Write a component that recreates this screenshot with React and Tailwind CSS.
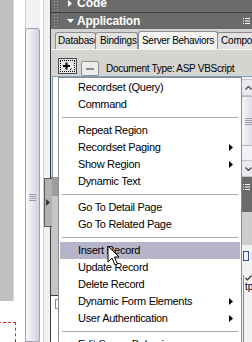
import React from "react";

const font = "font-['Liberation_Sans',Arial,sans-serif]";

function Grip({ className = "" }) {
  return (
    <div
      className={`h-full bg-[radial-gradient(#a9a9a9_0.9px,transparent_1px)] bg-[length:3px_3px] ${className}`}
    />
  );
}

function OptionsIcon() {
  return (
    <svg width="7" height="6" viewBox="0 0 7 6">
      <rect x="0" y="0" width="1" height="1" fill="#fff" />
      <rect x="2" y="0" width="5" height="1" fill="#fff" />
      <rect x="0" y="2.5" width="1" height="1" fill="#fff" />
      <rect x="2" y="2.5" width="5" height="1" fill="#fff" />
      <rect x="0" y="5" width="1" height="1" fill="#fff" />
      <rect x="2" y="5" width="5" height="1" fill="#fff" />
    </svg>
  );
}

function MenuItem({ label, sub, active }) {
  return (
    <div
      className={`mx-px h-[17px] flex items-center pl-[18px] pr-[7px] ${
        active ? "bg-[#b5b4c8]" : ""
      }`}
    >
      <span className="flex-1 text-[11px] leading-[17px] tracking-[-0.3px] text-black whitespace-nowrap">
        {label}
      </span>
      {sub && (
        <svg width="4" height="7" viewBox="0 0 4 7">
          <path d="M0 0L4 3.5L0 7Z" fill="#000" />
        </svg>
      )}
    </div>
  );
}

function Sep() {
  return (
    <div className="h-[9px] flex items-center px-[3px]">
      <div className="h-px w-full bg-[#a9a9a9]" />
    </div>
  );
}

export default function App() {
  return (
    <div
      className={`relative w-[252px] h-[342px] overflow-hidden bg-white flex ${font}`}
    >
      {/* document area */}
      <div className="w-[25px] shrink-0 flex flex-col">
        <div className="w-[14px] h-[309px] bg-[#c0c0c0] border-r border-[#d6d6d6]" />
        <div className="mt-[21px] -ml-[2px] w-[18px] h-[20px] border-t border-r border-dashed border-[#e2261f]" />
      </div>

      {/* document scrollbar */}
      <div className="w-[15px] shrink-0 flex flex-col border-l border-[#c9c9d6] bg-[#f1f1f6]">
        <div className="h-[28px]" />
        <div className="flex-1 -ml-px rounded-t-[3px] border border-[#a2a2b6] bg-gradient-to-r from-[#f8f8fb] via-[#e6e6ef] to-[#cfcfde] flex flex-col items-center pt-[165px]">
          <div className="flex flex-col gap-[1px]">
            <div className="w-[7px] h-px bg-[#9c9cae]" />
            <div className="w-[7px] h-px bg-[#9c9cae]" />
            <div className="w-[7px] h-px bg-[#9c9cae]" />
            <div className="w-[7px] h-px bg-[#9c9cae]" />
          </div>
        </div>
      </div>
      <div className="w-[3px] shrink-0 bg-white" />
      <div className="w-px shrink-0 bg-[#cdcdcd]" />
      <div className="w-[6px] shrink-0 bg-[#f2f2f2]" />

      {/* panel */}
      <div className="w-[206px] shrink-0 border-l border-[#3a3a3a] bg-[#d5d4d0] flex flex-col">
        {/* Code header */}
        <div className="h-[12px] shrink-0 bg-[#6b6b6b] flex items-start">
          <Grip className="w-[7px] ml-[2px] shrink-0" />
          <svg width="4" height="7" viewBox="0 0 4 7" className="ml-[8px] shrink-0">
            <path d="M0 0L4 3.5L0 7Z" fill="#fff" />
          </svg>
          <span className="ml-[5px] text-[12px] leading-[7px] font-bold text-white">
            Code
          </span>
        </div>
        <div className="h-px shrink-0 bg-[#3f3f3f]" />
        {/* Application header */}
        <div className="h-[16px] shrink-0 bg-[#6b6b6b] flex items-center">
          <Grip className="w-[7px] ml-[2px] shrink-0" />
          <svg width="7" height="4" viewBox="0 0 7 4" className="ml-[7px] shrink-0">
            <path d="M0 0L7 0L3.5 4Z" fill="#fff" />
          </svg>
          <span className="ml-[3px] text-[12px] leading-[16px] font-bold text-white tracking-[-0.2px]">
            Application
          </span>
          <div className="ml-auto mr-[6px] flex">
            <OptionsIcon />
          </div>
        </div>
        {/* tabs */}
        <div className="h-[21px] shrink-0 flex items-end pl-[4px] border-b border-[#f4f4f4] overflow-hidden">
          <div className="shrink-0 w-[41px] h-[17px] overflow-hidden border border-b-0 border-[#8e8e8e] rounded-t-[3px] bg-[#e2e2e2] pl-[2px] text-[10px] leading-[16px] tracking-[-0.2px] whitespace-nowrap text-black">
            Databases
          </div>
          <div className="shrink-0 -ml-px w-[43px] h-[17px] overflow-hidden border border-b-0 border-[#8e8e8e] rounded-t-[3px] bg-[#e2e2e2] pl-[4px] text-[10px] leading-[16px] tracking-[-0.2px] whitespace-nowrap text-black">
            Bindings
          </div>
          <div className="shrink-0 relative z-10 -mb-px w-[80px] h-[19px] overflow-hidden border border-b-0 border-[#8e8e8e] rounded-t-[3px] bg-[#f3f3f3] pl-[3px] text-[10px] leading-[18px] tracking-[-0.3px] whitespace-nowrap text-black">
            Server Behaviors
          </div>
          <div className="shrink-0 -ml-px w-[60px] h-[17px] overflow-hidden border border-b-0 border-[#8e8e8e] rounded-t-[3px] bg-[#e2e2e2] pl-[3px] text-[10px] leading-[16px] tracking-[-0.2px] whitespace-nowrap text-black">
            Components
          </div>
        </div>
        {/* toolbar */}
        <div className="h-[26px] shrink-0 flex items-start pl-[7px]">
          <div className="shrink-0 mt-[8px] w-[19px] h-[16px] border border-[#4a4a4a] bg-[#e6e6e6] flex items-center justify-center">
            <div className="w-[15px] h-[12px] border border-dotted border-black flex items-center justify-center">
              <svg width="9" height="9" viewBox="0 0 9 9">
                <path d="M3.5 0.5V7.5M0 4H7" stroke="#000" strokeWidth="2" />
                <path d="M7 8L8.5 6.5" stroke="#000" strokeWidth="1" />
              </svg>
            </div>
          </div>
          <div className="shrink-0 ml-[4px] mt-[11px] w-[18px] h-[15px] border border-[#8e8e8e] rounded-[2px] bg-[#ececec] flex items-center justify-center">
            <div className="w-[8px] h-[2px] bg-[#8a8a8a]" />
          </div>
          <span className="shrink-0 ml-[7px] mt-[13px] text-[10px] leading-[11px] tracking-[-0.3px] text-black whitespace-nowrap">
            Document Type: ASP VBScript
          </span>
        </div>
        {/* list area */}
        <div className="h-[101px] shrink-0 ml-px flex border-l border-t border-[#7f9db9] bg-white">
          <div className="flex-1" />
          <div className="w-[17px] bg-[#f1f1f5] flex flex-col border-l border-[#c6c6d2]">
            <div className="mt-[2px] h-[17px] mx-px rounded-[2px] border border-[#c4c4d2] bg-[#e9e9f0] flex items-center justify-center">
              <svg width="7" height="4" viewBox="0 0 7 4">
                <path d="M0.5 3.5L3.5 0.5L6.5 3.5" stroke="#4d4d5c" strokeWidth="1.4" fill="none" />
              </svg>
            </div>
            <div className="h-[50px] mx-px rounded-[2px] border border-[#b4b4c6] bg-gradient-to-r from-[#f6f6fa] to-[#d8d8e4] flex flex-col items-center justify-center gap-[1px]">
              <div className="w-[7px] h-px bg-[#9a9aac]" />
              <div className="w-[7px] h-px bg-[#9a9aac]" />
              <div className="w-[7px] h-px bg-[#9a9aac]" />
              <div className="w-[7px] h-px bg-[#9a9aac]" />
            </div>
            <div className="flex-1" />
            <div className="h-[17px] mx-px rounded-[2px] border border-[#c4c4d2] bg-[#e9e9f0] flex items-center justify-center">
              <svg width="7" height="4" viewBox="0 0 7 4">
                <path d="M0.5 0.5L3.5 3.5L6.5 0.5" stroke="#4d4d5c" strokeWidth="1.4" fill="none" />
              </svg>
            </div>
          </div>
        </div>
        {/* next panel header */}
        <div className="h-[19px] shrink-0 bg-[#6b6b6b] flex items-center">
          <div className="w-[6px] h-full ml-px bg-[#9b9b9b]">
            <Grip className="w-full" />
          </div>
          <div className="ml-auto mr-[6px] flex">
            <OptionsIcon />
          </div>
        </div>
        {/* body */}
        <div className="flex-1 flex">
          <div className="w-[7px] flex flex-col">
            <div className="h-[99px] bg-[#c6c6c6]" />
            <div className="h-px bg-[#3f3f3f]" />
            <div className="flex-1 bg-white pl-[4px] pt-[3px]">
              <div className="w-[5px] h-[10px] border border-[#8a8a8a]" />
            </div>
          </div>
          <div className="flex-1" />
          <div className="w-[15px] flex flex-col">
            <div className="h-[16px] bg-[#6b6b6b]" />
            <div className="h-[33px] bg-[#cdcdcd]" />
            <div className="flex-1 bg-[#f2f2f2] flex flex-col pl-[2px]">
              <div className="mt-[6px] w-[6px] h-[10px] border border-[#2a4fb0]" />
              <div className="mt-[14px] border-l border-[#8a8a8a] pl-[1px]">
                <svg width="7" height="6" viewBox="0 0 7 6">
                  <path d="M0.5 3L2.5 5L6.5 0.5" stroke="#333" strokeWidth="1.2" fill="none" />
                </svg>
                <div className="text-[10px] leading-[11px] text-black">tp</div>
                <div className="h-[50px]" />
              </div>
            </div>
          </div>
        </div>
      </div>

      {/* splitter handle */}
      <div className="absolute left-[44px] top-[178px] w-[8px] h-[49px] bg-[#b2b2b2] border-y border-l border-[#5a5a5a] flex items-center pl-[1px]">
        <svg width="4" height="7" viewBox="0 0 4 7">
          <path d="M0 0L4 3.5L0 7Z" fill="#3a3a3a" />
        </svg>
      </div>

      {/* dropdown menu */}
      <div className="absolute left-[58px] top-[77px] w-[184px] h-[280px] border border-[#8c8c8c] bg-white pt-px">
        <MenuItem label="Recordset (Query)" />
        <MenuItem label="Command" />
        <Sep />
        <MenuItem label="Repeat Region" />
        <MenuItem label="Recordset Paging" sub />
        <MenuItem label="Show Region" sub />
        <MenuItem label="Dynamic Text" />
        <Sep />
        <MenuItem label="Go To Detail Page" />
        <MenuItem label="Go To Related Page" />
        <Sep />
        <MenuItem label="Insert Record" active />
        <MenuItem label="Update Record" />
        <MenuItem label="Delete Record" />
        <MenuItem label="Dynamic Form Elements" sub />
        <MenuItem label="User Authentication" sub />
        <Sep />
        <MenuItem label="Edit Server Behaviors..." />
      </div>

      {/* mouse cursor */}
      <svg
        className="absolute left-[107px] top-[245px]"
        width="13"
        height="21"
        viewBox="0 0 13 21"
      >
        <path
          d="M1 1L1 17L5 13L8 20L10.5 19L7.5 12L12 12Z"
          fill="#fff"
          stroke="#000"
          strokeWidth="1"
          strokeLinejoin="miter"
        />
      </svg>
    </div>
  );
}
